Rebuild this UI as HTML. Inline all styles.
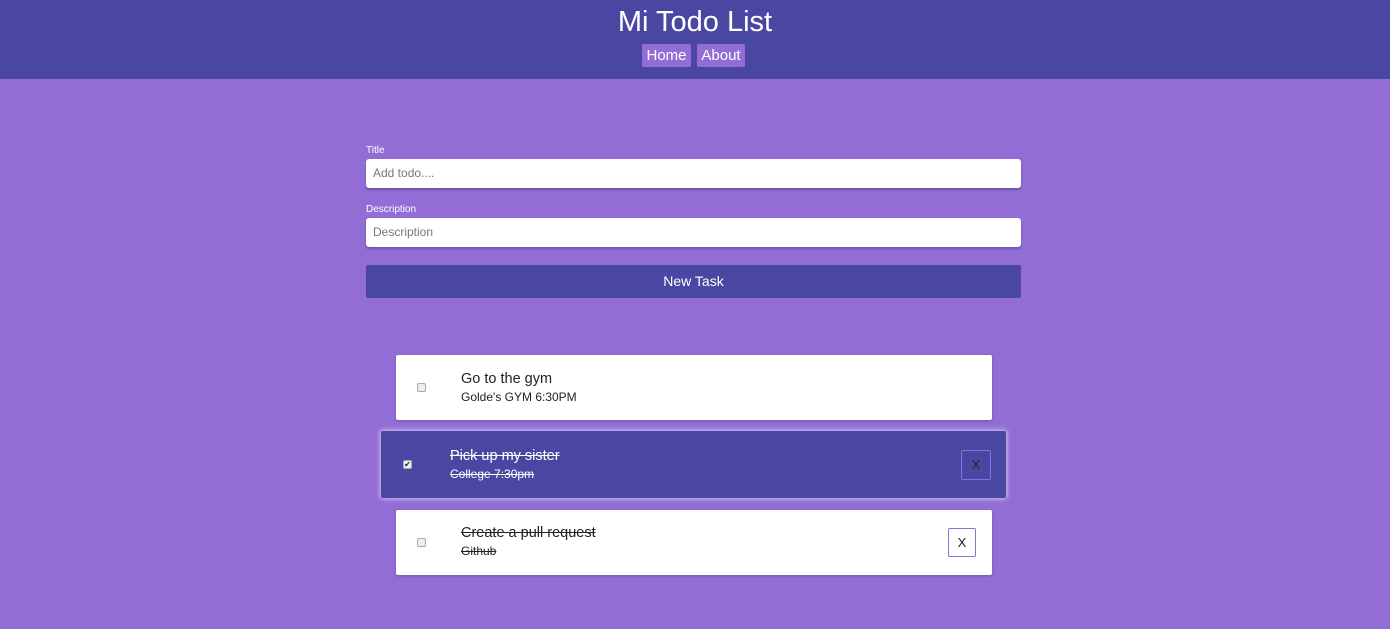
<!DOCTYPE html>
<html><head><style>
*{box-sizing:border-box;margin:0;padding:0}
body{width:1390px;height:629px;background:#926dd6;font-family:"Liberation Sans",sans-serif;position:relative;overflow:hidden}
header{position:absolute;left:0;top:0;width:1390px;height:79px;background:#4a47a3;text-align:center;color:#fff}
h1{font-weight:normal;font-size:29px;line-height:30px;padding-top:7px}
.nav{position:absolute;top:44px;height:23px;background:#926dd6;color:#fff;font-size:15px;line-height:23px;text-align:center;border-radius:2px}
.lbl{position:absolute;left:366px;color:#fff;font-size:10px}
.inp{position:absolute;left:366px;width:655px;height:29px;background:#fff;border-radius:3px;box-shadow:0 2px 2px rgba(0,0,0,.25);color:#777;font-size:12px;line-height:29px;padding-left:7px}
.btn{position:absolute;left:366px;top:265px;width:655px;height:33px;background:#4a47a3;border-radius:2px;color:#fff;font-size:14px;line-height:33px;text-align:center}
.card{position:absolute;background:#fff;border-radius:2px;box-shadow:0 1px 3px rgba(0,0,0,.2);color:#222}
.cb{position:absolute;width:9px;height:9px;border:1px solid #aaa;border-radius:2px;background:#eee}
.t{position:absolute;font-size:14.5px}
.d{position:absolute;font-size:12px}
.s{text-decoration:line-through}
.x{position:absolute;border:1px solid #926dd6;border-radius:2px;text-align:center;font-size:13px}
</style></head><body>
<header><h1>Mi Todo List</h1>
<div class="nav" style="left:642px;width:49px">Home</div>
<div class="nav" style="left:697px;width:48px">About</div></header>
<div class="lbl" style="top:145px">Title</div>
<div class="inp" style="top:159px">Add todo....</div>
<div class="lbl" style="top:204px">Description</div>
<div class="inp" style="top:218px">Description</div>
<div class="btn">New Task</div>

<div class="card" style="left:396px;top:355px;width:596px;height:65px">
<div class="cb" style="left:21px;top:28px"></div>
<div class="t" style="left:65px;top:16px">Go to the gym</div>
<div class="d" style="left:65px;top:35px">Golde's GYM 6:30PM</div></div>

<div class="card" style="left:381px;top:431px;width:625px;height:67px;background:#4a47a3;color:#fff;box-shadow:0 0 5px 1px rgba(255,255,255,.6)">
<div class="cb" style="left:22px;top:29px;background:#eee;color:#222;font-size:8px;line-height:8px;text-align:center">✔</div>
<div class="t s" style="left:69px;top:17px">Pick up my sister</div>
<div class="d s" style="left:69px;top:36px">College 7:30pm</div>
<div class="x" style="left:580px;top:19px;width:30px;height:30px;line-height:28px;color:#222">X</div></div>

<div class="card" style="left:396px;top:510px;width:596px;height:65px">
<div class="cb" style="left:21px;top:28px"></div>
<div class="t s" style="left:65px;top:15px">Create a pull request</div>
<div class="d s" style="left:65px;top:34px">Github</div>
<div class="x" style="left:552px;top:18px;width:28px;height:29px;line-height:27px">X</div></div>
</body></html>
